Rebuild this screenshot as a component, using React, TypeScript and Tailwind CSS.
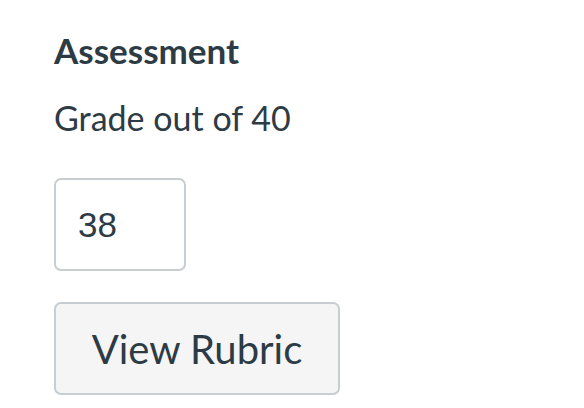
export default function App() {
  return (
    <div className="min-h-[408px] bg-white pl-[54px] pt-[28px] font-['Lato',sans-serif] text-[#2d3b45]">
      <h2 className="text-[35px] font-bold leading-[44px]">Assessment</h2>
      <p className="mt-[24px] text-[34px] leading-[44px]">Grade out of 40</p>
      <input
        type="text"
        defaultValue="38"
        aria-label="Grade out of 40"
        className="mt-[38px] block h-[93px] w-[132px] rounded-[7px] border-2 border-[#c7cdd1] bg-white px-[22px] font-['Liberation_Sans',Arial,sans-serif] text-[35px] text-[#2d3b45] outline-none"
      />
      <button
        type="button"
        className="mt-[31px] block h-[93px] w-[286px] rounded-[7px] border-2 border-[#c7cdd1] bg-[#f5f5f5] text-center text-[40px] text-[#2d3b45]"
      >
        View Rubric
      </button>
    </div>
  );
}
